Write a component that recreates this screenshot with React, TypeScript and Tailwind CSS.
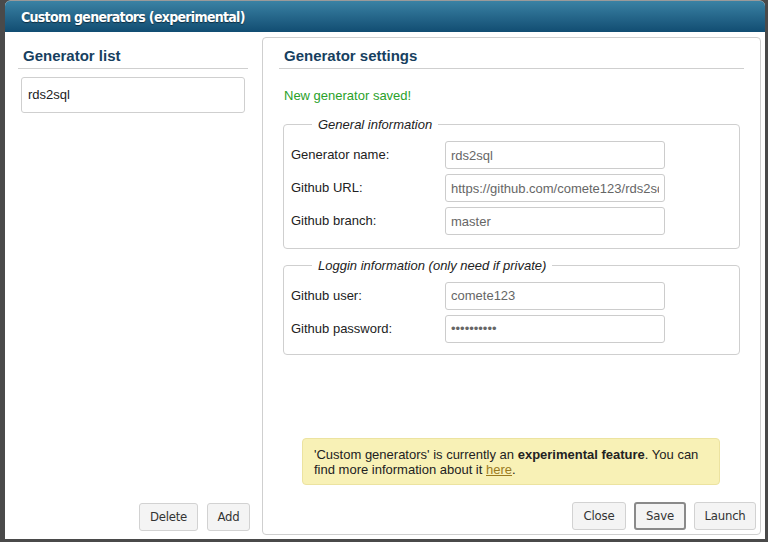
import React from 'react';

const sans = { fontFamily: '"Liberation Sans", Arial, sans-serif' };

const FieldRow: React.FC<{ label: string; value: string; type?: string }> = ({ label, value, type = 'text' }) => (
  <div className="flex items-center h-[28px] mb-[5px]">
    <label className="w-[154px] text-[13px] text-[#222]">{label}</label>
    <input
      type={type}
      readOnly
      value={value}
      className="w-[220px] h-[28px] border border-[#ccc] rounded-[3px] px-[5px] text-[13px] text-[#666] bg-white outline-none"
    />
  </div>
);

const Btn: React.FC<{ children: React.ReactNode; active?: boolean; w: string }> = ({ children, active, w }) => (
  <button
    className={`${w} h-[28px] rounded-[3px] bg-[#f4f4f4] text-[13px] text-[#333] tracking-[-0.2px] font-['DejaVu_Sans_Condensed',sans-serif] ${
      active ? 'border-2 border-[#8a8a8a]' : 'border border-[#d2d2d2]'
    }`}
  >
    {children}
  </button>
);

export default function App() {
  return (
    <div className="w-[768px] h-[542px] bg-[#4a4a4a] pl-[5px] pr-[3px] overflow-hidden" style={sans}>
      <div className="w-[760px] h-[539px] bg-white rounded-t-[6px] border-t border-[#9a9a9a] flex flex-col">
        <div className="h-[31px] rounded-t-[5px] bg-gradient-to-b from-[#3a82a4] to-[#114d72] flex items-center pl-[16px] pt-[1px]">
          <span
            className="text-white text-[14px] font-bold tracking-[-0.7px] [text-shadow:0_1px_1px_rgba(0,0,0,0.5)]"
            style={{ fontFamily: '"DejaVu Sans Condensed", "DejaVu Sans", sans-serif' }}
          >
            Custom generators (experimental)
          </span>
        </div>

        <div className="flex flex-1">
          {/* left column */}
          <div className="w-[257px] flex flex-col pl-[13px] pr-[14px] pb-[8px]">
            <h2 className="mt-[14px] h-[23px] px-[5px] text-[15px] font-bold text-[#173f5f] border-b border-[#cfcfcf] leading-[20px]">
              Generator list
            </h2>
            <div className="mt-[8px] mx-[3px] h-[36px] border border-[#cfcfcf] rounded-[3px] flex items-center px-[6px] text-[13px] text-[#222]">
              rds2sql
            </div>
            <div className="mt-auto flex justify-end gap-[9px] -mr-[2px]">
              <Btn w="w-[59px]">Delete</Btn>
              <Btn w="w-[43px]">Add</Btn>
            </div>
          </div>

          {/* right panel */}
          <div className="w-[499px] mt-[5px] mb-[4px] border border-[#cfcfcf] rounded-[4px] flex flex-col px-[16px] pb-[4px]">
            <h2 className="mt-[9px] h-[22px] px-[5px] text-[15px] font-bold text-[#173f5f] border-b border-[#cfcfcf] leading-[18px]">
              Generator settings
            </h2>
            <p className="mt-[17px] px-[5px] text-[13px] text-[#2aa12a]">New generator saved!</p>

            <fieldset className="mt-[9px] mx-[4px] border border-[#cfcfcf] rounded-[4px] px-[7px] pt-[7px] pb-[8px]">
              <legend className="ml-[21px] px-[6px] text-[13px] italic text-[#222]">General information</legend>
              <FieldRow label="Generator name:" value="rds2sql" />
              <FieldRow label="Github URL:" value="https://github.com/comete123/rds2sql" />
              <FieldRow label="Github branch:" value="master" />
            </fieldset>

            <fieldset className="mt-[7px] mx-[4px] border border-[#cfcfcf] rounded-[4px] px-[7px] pt-[6px] pb-[6px]">
              <legend className="ml-[21px] px-[6px] text-[13px] italic text-[#222]">
                Loggin information (only need if private)
              </legend>
              <FieldRow label="Github user:" value="comete123" />
              <FieldRow label="Github password:" value="passwords1" type="password" />
            </fieldset>

            <div className="mt-auto mx-[23px] w-[418px] rounded-[4px] border border-[#ece3a0] bg-[#f8f1b6] px-[11px] pt-[8px] pb-[7px] text-[13px] leading-[15px] text-[#222]">
              'Custom generators' is currently an <b>experimental feature</b>. You can find more information about it{' '}
              <a className="text-[#9a7a1e] underline">here</a>.
            </div>

            <div className="mt-[17px] flex justify-end gap-[8px] -mr-[12px]">
              <Btn w="w-[54px]">Close</Btn>
              <Btn w="w-[52px]" active>Save</Btn>
              <Btn w="w-[62px]">Launch</Btn>
            </div>
          </div>
        </div>
      </div>
    </div>
  );
}
